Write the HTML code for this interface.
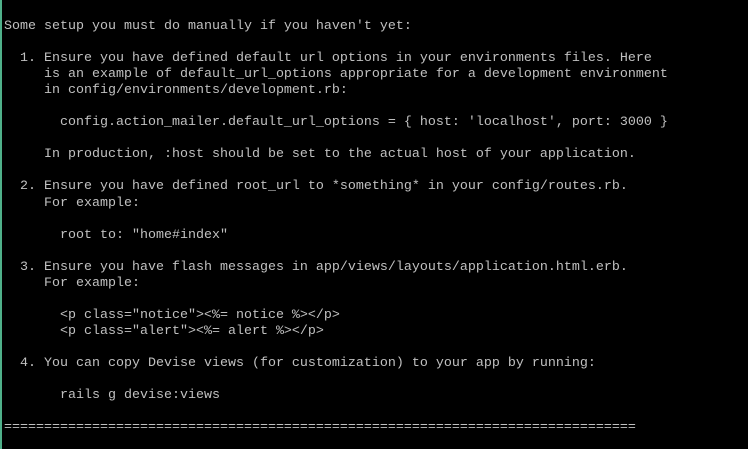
<!DOCTYPE html>
<html><head><style>
html,body{margin:0;padding:0;background:#000;width:748px;height:449px;overflow:hidden}
body{border-left:2px solid #4fb08a;box-sizing:border-box}
pre{margin:0;padding:19px 0 0 2px;font-family:"Liberation Mono",monospace;font-size:13.33px;line-height:16.04px;color:#c0c0c0}
</style></head><body><pre>Some setup you must do manually if you haven't yet:

  1. Ensure you have defined default url options in your environments files. Here
     is an example of default_url_options appropriate for a development environment
     in config/environments/development.rb:

       config.action_mailer.default_url_options = { host: 'localhost', port: 3000 }

     In production, :host should be set to the actual host of your application.

  2. Ensure you have defined root_url to *something* in your config/routes.rb.
     For example:

       root to: "home#index"

  3. Ensure you have flash messages in app/views/layouts/application.html.erb.
     For example:

       &lt;p class="notice"&gt;&lt;%= notice %&gt;&lt;/p&gt;
       &lt;p class="alert"&gt;&lt;%= alert %&gt;&lt;/p&gt;

  4. You can copy Devise views (for customization) to your app by running:

       rails g devise:views

===============================================================================</pre></body></html>
